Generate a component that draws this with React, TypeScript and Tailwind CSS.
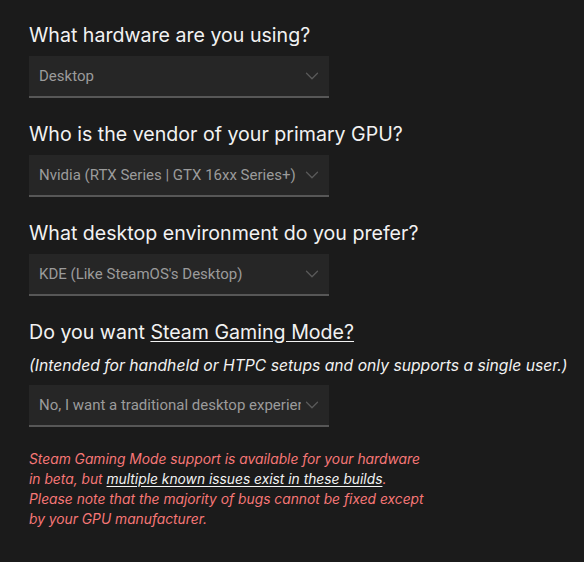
import { ChevronDown } from "lucide-react";

const heading = "text-[19.6px] leading-7 text-[#f2f2f2] font-['Inter',sans-serif]";

function Select({ value }: { value: string }) {
  return (
    <div className="mt-[7px] flex h-[42px] w-[300px] items-center justify-between border-b-2 border-[#575757] bg-[#262626] pl-[10px] pr-[6px]">
      <span className="overflow-hidden whitespace-nowrap font-['Roboto',sans-serif] text-[15px] text-[#9b9b9b]">
        {value}
      </span>
      <ChevronDown className="h-[22px] w-[22px] shrink-0 text-[#5a5a5a]" strokeWidth={1.4} />
    </div>
  );
}

export default function App() {
  return (
    <div className="min-h-[562px] w-[584px] bg-[#1b1b1b] px-[29px] pt-[21px]">
      <div>
        <h2 className={heading}>What hardware are you using?</h2>
        <Select value="Desktop" />
      </div>
      <div className="mt-[22px]">
        <h2 className={heading}>Who is the vendor of your primary GPU?</h2>
        <Select value="Nvidia (RTX Series | GTX 16xx Series+)" />
      </div>
      <div className="mt-[22px]">
        <h2 className={heading}>What desktop environment do you prefer?</h2>
        <Select value="KDE (Like SteamOS's Desktop)" />
      </div>
      <div className="mt-[22px]">
        <h2 className={heading}>
          Do you want <span className="underline underline-offset-2">Steam Gaming Mode?</span>
        </h2>
        <p className="mt-2 whitespace-nowrap font-['Inter',sans-serif] text-[15.7px] italic leading-6 text-[#f2f2f2]">
          (Intended for handheld or HTPC setups and only supports a single user.)
        </p>
        <div className="mt-[2px]">
          <Select value="No, I want a traditional desktop experience" />
        </div>
      </div>
      <p className="mt-[22px] font-['Inter',sans-serif] text-[13.8px] italic leading-5 text-[#f77777]">
        Steam Gaming Mode support is available for your hardware
        <br />
        in beta, but{" "}
        <span className="text-[#f2f2f2] underline underline-offset-2">
          multiple known issues exist in these builds
        </span>
        .
        <br />
        Please note that the majority of bugs cannot be fixed except
        <br />
        by your GPU manufacturer.
      </p>
    </div>
  );
}
